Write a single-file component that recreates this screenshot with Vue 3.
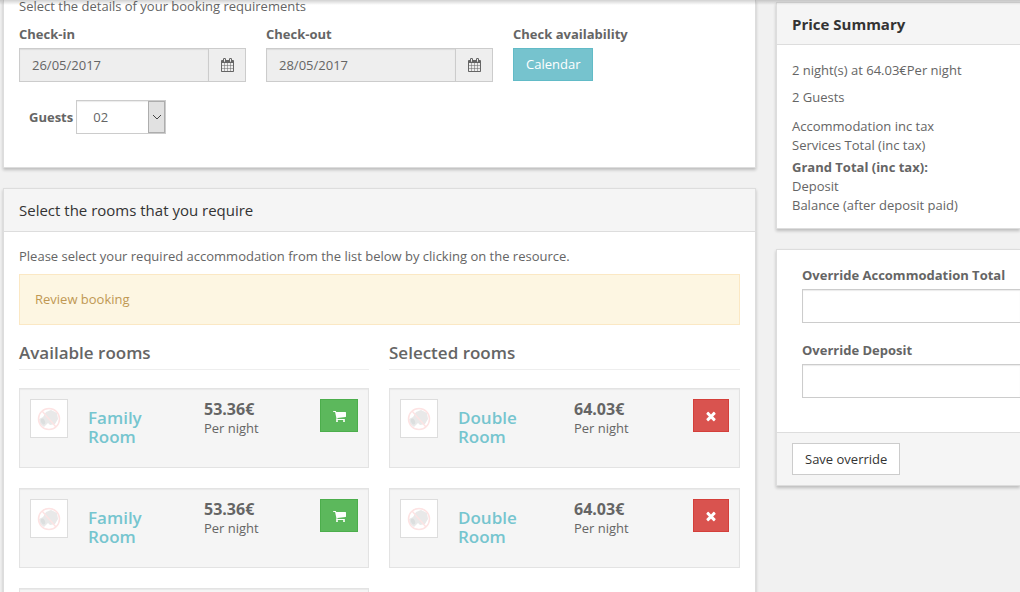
<script setup>
import { ref } from 'vue'

const checkIn = ref('26/05/2017')
const checkOut = ref('28/05/2017')
const guests = ref('02')
const overrideTotal = ref('')
const overrideDeposit = ref('')

const dates = [
  { id: 'check-in', label: 'Check-in', model: checkIn },
  { id: 'check-out', label: 'Check-out', model: checkOut },
]

const columns = [
  {
    title: 'Available rooms',
    kind: 'add',
    action: 'Add room',
    rooms: [
      { name: 'Family Room', price: '53.36€' },
      { name: 'Family Room', price: '53.36€' },
      null,
    ],
  },
  {
    title: 'Selected rooms',
    kind: 'remove',
    action: 'Remove room',
    rooms: [
      { name: 'Double Room', price: '64.03€' },
      { name: 'Double Room', price: '64.03€' },
    ],
  },
]

const icons = {
  calendar:
    'M192 1664h288v-288h-288v288zm352 0h320v-288h-320v288zm-352-352h288v-320h-288v320zm352 0h320v-320h-320v320zm-352-384h288v-288h-288v288zm736 736h320v-288h-320v288zm-384-736h320v-288h-320v288zm768 736h288v-288h-288v288zm-384-352h320v-320h-320v320zm-352-864v-288q0-13-9.5-22.5t-22.5-9.5h-64q-13 0-22.5 9.5t-9.5 22.5v288q0 13 9.5 22.5t22.5 9.5h64q13 0 22.5-9.5t9.5-22.5zm736 864h288v-320h-288v320zm-384-384h320v-288h-320v288zm384 0h288v-288h-288v288zm32-480v-288q0-13-9.5-22.5t-22.5-9.5h-64q-13 0-22.5 9.5t-9.5 22.5v288q0 13 9.5 22.5t22.5 9.5h64q13 0 22.5-9.5t9.5-22.5zm384-64v1280q0 52-38 90t-90 38h-1408q-52 0-90-38t-38-90v-1280q0-52 38-90t90-38h128v-96q0-66 47-113t113-47h64q66 0 113 47t47 113v96h384v-96q0-66 47-113t113-47h64q66 0 113 47t47 113v96h128q52 0 90 38t38 90z',
  add: 'M704 1536q0 52-38 90t-90 38-90-38-38-90 38-90 90-38 90 38 38 90zm896 0q0 52-38 90t-90 38-90-38-38-90 38-90 90-38 90 38 38 90zm128-1088v512q0 24-16.5 42.5t-40.5 21.5l-1044 122q13 60 13 70 0 16-24 64h920q26 0 45 19t19 45-19 45-45 19h-1024q-26 0-45-19t-19-45q0-11 8-31.5t16-36 21.5-40 15.5-29.5l-177-823h-204q-26 0-45-19t-19-45 19-45 45-19h256q16 0 28.5 6.5t19.5 15.5 13 24.5 8 26 5.5 29.5 4.5 26h1201q26 0 45 19t19 45z',
  remove:
    'M1490 1322q0 40-28 68l-136 136q-28 28-68 28t-68-28l-294-294-294 294q-28 28-68 28t-68-28l-136-136q-28-28-28-68t28-68l294-294-294-294q-28-28-28-68t28-68l136-136q28-28 68-28t68 28l294 294 294-294q28-28 68-28t68 28l136 136q28 28 28 68t-28 68l-294 294 294 294q28 28 28 68z',
}
</script>

<template>
  <div class="page">
    <div class="header-shadow"></div>
    <main class="main">
      <section class="panel panel-cut">
        <div class="details">
          <p class="intro">Select the details of your booking requirements</p>
          <div class="fields">
            <div v-for="d in dates" :key="d.id" class="field">
              <label :for="d.id">{{ d.label }}</label>
              <div class="date-group">
                <input :id="d.id" v-model="d.model.value" class="control" type="text" readonly />
                <button class="addon" type="button" :aria-label="d.label + ' calendar'">
                  <svg width="13" height="14" viewBox="64 0 1664 1792"><path :d="icons.calendar" /></svg>
                </button>
              </div>
            </div>
            <div class="field">
              <label for="availability">Check availability</label>
              <button id="availability" class="btn btn-info" type="button">Calendar</button>
            </div>
          </div>
          <div class="guests">
            <label for="guests">Guests</label>
            <div class="select-wrap">
              <select id="guests" v-model="guests">
                <option>02</option>
              </select>
              <span class="arrow">
                <svg width="10" height="6" viewBox="0 0 10 6"><path d="M1 1l4 4 4-4" /></svg>
              </span>
            </div>
          </div>
        </div>
      </section>

      <section class="panel">
        <h2 class="panel-head">Select the rooms that you require</h2>
        <div class="panel-body">
          <p>Please select your required accommodation from the list below by clicking on the resource.</p>
          <div class="alert">Review booking</div>
          <div class="columns">
            <div v-for="col in columns" :key="col.title">
              <h3>{{ col.title }}</h3>
              <ul class="rooms">
                <li v-for="(room, i) in col.rooms" :key="i" class="room">
                  <template v-if="room">
                    <span class="thumb">
                      <svg width="24" height="24" viewBox="0 0 24 24">
                        <path class="camera" d="M9 5l5-2 6 3 1 6-3 5-5 1-2-2-4 4-4-3-1-5 4-2z" />
                        <ellipse class="lens" cx="6" cy="14.500" rx="2" ry="3" transform="rotate(-25 6 14.500)" />
                        <circle class="ban" cx="12" cy="12" r="10.500" />
                        <path class="ban" d="M5 4l14 16" />
                      </svg>
                    </span>
                    <h4><a href="#">{{ room.name }}</a></h4>
                    <div class="price">
                      <strong>{{ room.price }}</strong>
                      <span>Per night</span>
                    </div>
                    <button class="btn btn-icon" :class="'btn-' + col.kind" type="button" :aria-label="col.action">
                      <svg v-if="col.kind === 'add'" width="13" height="14" viewBox="64 0 1664 1792"><path :d="icons.add" /></svg>
                      <svg v-else width="12" height="14" viewBox="128 0 1536 1792"><path :d="icons.remove" /></svg>
                    </button>
                  </template>
                </li>
              </ul>
            </div>
          </div>
        </div>
      </section>
    </main>

    <aside class="side">
      <section class="panel">
        <h2 class="panel-head strong">Price Summary</h2>
        <div class="summary">
          <p>2 night(s) at 64.03€Per night</p>
          <p>2 Guests</p>
          <ul>
            <li>Accommodation inc tax</li>
            <li>Services Total (inc tax)</li>
            <li class="grand">Grand Total (inc tax):</li>
            <li>Deposit</li>
            <li>Balance (after deposit paid)</li>
          </ul>
        </div>
      </section>

      <form class="panel" @submit.prevent>
        <div class="override">
          <div class="field">
            <label for="override-total">Override Accommodation Total</label>
            <input id="override-total" v-model="overrideTotal" class="control" type="text" />
          </div>
          <div class="field">
            <label for="override-deposit">Override Deposit</label>
            <input id="override-deposit" v-model="overrideDeposit" class="control" type="text" />
          </div>
        </div>
        <div class="panel-foot">
          <button class="btn btn-default" type="submit">Save override</button>
        </div>
      </form>
    </aside>
  </div>
</template>

<style>
body {
  background: #f1f1f1;
}
</style>

<style scoped>
* {
  box-sizing: border-box;
}
.page {
  position: relative;
  display: grid;
  grid-template-columns: minmax(0, 753fr) minmax(0, 244fr);
  gap: 20px;
  height: 100vh;
  padding-left: 3px;
  overflow: hidden;
  font-family: "Open Sans", "Liberation Sans", sans-serif;
  font-size: 13px;
  line-height: 19px;
  color: #656565;
}
.header-shadow {
  position: absolute;
  inset: 0 0 auto;
  height: 5px;
  background: linear-gradient(rgba(0, 0, 0, 0.18), rgba(0, 0, 0, 0));
  pointer-events: none;
}
p,
h2,
h3,
h4,
ul {
  margin: 0;
  padding: 0;
}
ul {
  list-style: none;
}
input,
select,
button {
  margin: 0;
  font: inherit;
  color: inherit;
  border-radius: 0;
}
svg {
  display: block;
  fill: currentColor;
}
.main,
.side {
  display: flex;
  flex-direction: column;
  gap: 20px;
}
.side {
  padding-top: 2px;
}
.panel {
  flex: none;
  background: #fff;
  border: 1px solid #ddd;
  box-shadow: 0 2px 3px rgba(0, 0, 0, 0.22);
}
.side .panel {
  border-right: 0;
}
.panel-cut {
  border-top: 0;
}
.panel-head {
  padding: 11px 15px;
  background: #f5f5f5;
  border-bottom: 1px solid #ddd;
  font-size: 15px;
  line-height: 20px;
  font-weight: 400;
  color: #333;
}
.strong {
  padding-bottom: 10px;
  font-weight: 700;
}
.details {
  padding: 0 15px 33px;
}
.intro {
  line-height: 12px;
  margin-bottom: 13px;
}
label {
  font-weight: 700;
}
.fields {
  display: grid;
  grid-template-columns: repeat(3, minmax(0, 1fr));
  gap: 20px;
}
.field {
  display: flex;
  flex-direction: column;
  align-items: flex-start;
  gap: 4px;
}
.control {
  width: 100%;
  height: 34px;
  padding: 6px 12px;
  background: #fff;
  border: 1px solid #ccc;
  box-shadow: inset 0 1px 1px rgba(0, 0, 0, 0.08);
  outline: none;
}
.date-group {
  display: flex;
  width: 100%;
}
.date-group .control {
  flex: 1;
  min-width: 0;
  background: #eee;
}
.addon {
  display: grid;
  place-items: center;
  width: 37px;
  padding: 0;
  background: #eee;
  border: 1px solid #ccc;
  border-left: 0;
}
.guests {
  display: flex;
  align-items: center;
  gap: 3px;
  margin-top: 18px;
  padding-left: 10px;
}
.select-wrap {
  position: relative;
}
select {
  display: block;
  width: 90px;
  height: 34px;
  padding: 0 16px;
  appearance: none;
  background: #fff;
  border: 1px solid #ccc;
  box-shadow: inset 0 1px 1px rgba(0, 0, 0, 0.08);
}
.arrow {
  position: absolute;
  inset: 1px 1px 1px auto;
  display: grid;
  place-items: center;
  width: 17px;
  background: #e1e1e1;
  border: 1px solid #adadad;
  pointer-events: none;
}
.arrow path {
  fill: none;
  stroke: #444;
}
.panel-body {
  padding: 15px;
}
.alert {
  margin: 8px 0 18px;
  padding: 15px;
  background: #fdf6e2;
  border: 1px solid #fbe8c4;
  color: #c09853;
}
.columns {
  display: grid;
  grid-template-columns: minmax(0, 350fr) minmax(0, 351fr);
  gap: 20px;
}
h3 {
  padding-bottom: 7px;
  margin-bottom: 18px;
  border-bottom: 1px solid #eee;
  font-size: 17px;
  line-height: 19px;
  font-weight: 600;
}
.rooms {
  display: flex;
  flex-direction: column;
  gap: 20px;
}
.room {
  display: grid;
  grid-template-columns: 38px minmax(0, 96px) minmax(0, 1fr) auto;
  column-gap: 20px;
  align-items: start;
  min-height: 80px;
  padding: 10px;
  background: #f5f5f5;
  border: 1px solid #e3e3e3;
  box-shadow: inset 0 1px 1px rgba(0, 0, 0, 0.05);
}
.thumb {
  display: grid;
  place-items: center;
  height: 39px;
  background: #fff;
  border: 1px solid #ddd;
}
.camera {
  fill: #e9e9e9;
}
.lens {
  fill: #dcdfdf;
}
.ban {
  fill: none;
  stroke: #fde3e3;
  stroke-width: 1.500;
}
h4 {
  padding-top: 9px;
  font-size: 17px;
  line-height: 19px;
  font-weight: 600;
}
a {
  color: #76c5cf;
  text-decoration: none;
}
.price {
  display: flex;
  flex-direction: column;
}
.price strong {
  font-size: 16px;
  line-height: 20px;
}
.btn {
  height: 33px;
  padding: 0 12px;
  border: 1px solid;
}
.btn-info {
  background: #76c3ce;
  border-color: #62bbc7;
  color: #fff;
}
.btn-default {
  height: 32px;
  background: #fff;
  border-color: #ccc;
  color: #333;
}
.btn-icon {
  display: grid;
  place-items: center;
  padding: 0;
  color: #fff;
}
.btn-add {
  width: 38px;
  background: #5cb85c;
  border-color: #4cae4c;
}
.btn-remove {
  width: 36px;
  background: #d9534f;
  border-color: #d43f3a;
}
.summary {
  padding: 16px 15px 13px;
}
.summary p {
  margin-bottom: 8px;
}
.summary ul {
  padding-top: 2px;
}
.grand {
  padding-top: 3px;
  font-weight: 700;
}
.override {
  display: flex;
  flex-direction: column;
  gap: 18px;
  padding: 16px 0 34px 25px;
}
.override .control {
  border-right: 0;
}
.panel-foot {
  padding: 10px 15px;
  background: #f5f5f5;
  border-top: 1px solid #ddd;
}
</style>
